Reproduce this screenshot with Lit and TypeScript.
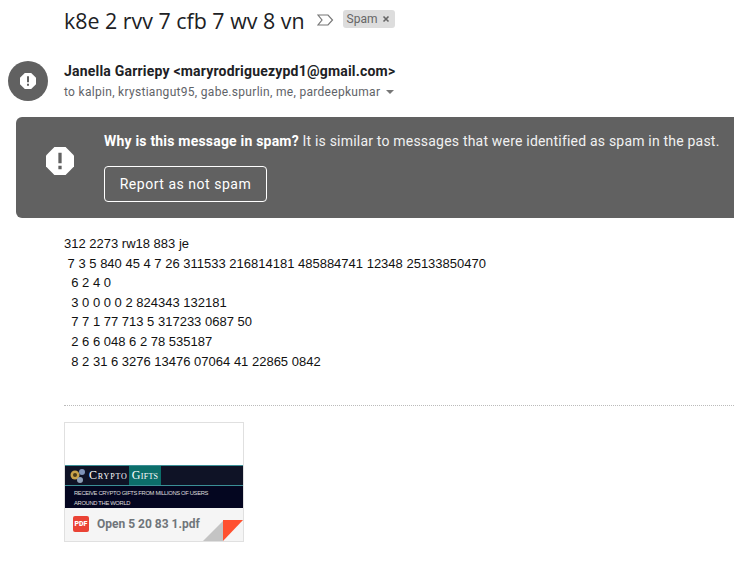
import { LitElement, html, css } from "lit";
import { customElement } from "lit/decorators.js";

const octagon = "M7.2 0h9.6L24 7.2v9.6L16.8 24H7.2L0 16.8V7.2z";

@customElement("app-root")
export class AppRoot extends LitElement {
  static styles = css`
    :host { display: block; width: 734px; height: 564px; overflow: hidden; background: #fff; font-family: Roboto, sans-serif; color: #202124; }
    .subject { display: flex; align-items: center; height: 40px; padding-left: 64px; }
    .title { font-family: "Open Sans", Roboto, sans-serif; font-size: 21.4px; color: #202124; white-space: nowrap; }
    .imp { margin-left: 12px; display: block; }
    .chip { display: flex; align-items: center; margin: 0 0 2px 9px; height: 18px; padding: 0 5px 0 4px; gap: 5px; background: #ddd; border-radius: 3px; font-size: 12px; color: #666; }
    .chip-x { display: block; }
    .sender { display: flex; margin-top: 21px; padding-left: 8px; }
    .avatar { width: 40px; height: 40px; border-radius: 50%; background: #616161; display: flex; align-items: center; justify-content: center; flex: none; }
    .who { margin-left: 16px; padding-top: 1px; }
    .from { font-size: 14px; font-weight: 700; line-height: 18px; letter-spacing: .2px; color: #202124; white-space: nowrap; }
    .to { display: flex; align-items: center; margin-top: 4px; font-size: 12px; line-height: 16px; letter-spacing: .3px; color: #5f6368; white-space: nowrap; }
    .caret { margin-left: 6px; width: 0; height: 0; border-left: 4px solid transparent; border-right: 4px solid transparent; border-top: 4px solid #777; }
    .banner { display: flex; margin: 16px 0 0 16px; height: 101px; background: #616161; border-radius: 6px 0 0 6px; color: #fff; box-sizing: border-box; }
    .banner-icon { width: 88px; display: flex; justify-content: center; flex: none; padding-top: 30px; box-sizing: border-box; }
    .banner-main { padding-top: 14px; }
    .why { font-size: 14px; line-height: 20px; letter-spacing: .2px; white-space: nowrap; color: #f1f1f1; }
    .why b { font-weight: 700; color: #fff; }
    .btn { display: flex; align-items: center; justify-content: center; margin-top: 15px; width: 163px; height: 36px; box-sizing: border-box; border: 1px solid #fff; border-radius: 4px; font-size: 14px; letter-spacing: .53px; color: #fff; }
    .body { margin: 16px 0 0 64px; font-family: "Liberation Sans", Arial, sans-serif; font-size: 13px; line-height: 19.6px; color: #111; white-space: pre; }
    .rule { margin: 34px 0 0 64px; border-top: 1px dotted #bbb; }
    .att { position: relative; margin: 16px 0 0 64px; width: 180px; height: 120px; box-sizing: border-box; border: 1px solid #e0e0e0; display: flex; flex-direction: column; overflow: hidden; }
    .blank { height: 42px; flex: none; }
    .thumb { height: 43px; background: #040620; border-top: 1px solid #3b8f96; flex: none; box-sizing: border-box; }
    .brand { display: flex; align-items: center; height: 19px; background: #0f1326; border-bottom: 1px solid #3b8f96; padding-left: 5px; }
    .coin { display: block; }
    .crypto { margin-left: 1px; font-family: "Liberation Serif", serif; font-size: 12px; letter-spacing: .85px; color: #fff; font-variant: small-caps; white-space: nowrap; }
    .gifts { margin-left: 1px; padding: 0 3px; height: 19px; line-height: 19px; background: #0c6e6a; font-family: "Liberation Serif", serif; font-size: 12px; letter-spacing: .3px; color: #fff; font-variant: small-caps; }
    .tag { padding: 2px 0 0 9px; font-family: "Liberation Sans", sans-serif; font-size: 5.8px; letter-spacing: -.33px; line-height: 10px; color: #ddd; white-space: nowrap; }
    .foot { flex: 1; background: #f5f5f5; display: flex; align-items: center; padding: 0 0 2px 8px; gap: 8px; }
    .pdf { width: 16px; height: 16px; background: #ea4335; border-radius: 2px; color: #fff; font-size: 7px; font-weight: 900; display: flex; align-items: center; justify-content: center; flex: none; }
    .name { font-size: 12px; font-weight: 700; color: #70757a; white-space: nowrap; }
    .fold { position: absolute; right: 0; bottom: 0; display: block; }
  `;

  render() {
    return html`
      <div class="subject">
        <span class="title">k8e 2 rvv 7 cfb 7 wv 8 vn</span>
        <svg class="imp" width="17" height="12" viewBox="0 0 17 12"><path d="M1 1h10l4.5 5-4.5 5H1l4-5z" fill="none" stroke="#777" stroke-width="1.2"/></svg>
        <span class="chip">Spam<svg class="chip-x" width="8" height="8" viewBox="0 0 8 8"><path d="M1.5 1.5l5 5M6.5 1.5l-5 5" stroke="#666" stroke-width="1.6"/></svg></span>
      </div>
      <div class="sender">
        <div class="avatar"><svg width="16" height="16" viewBox="0 0 24 24"><path fill="#fff" d="${octagon}"/><path fill="#616161" d="M10.5 5h3v9h-3zM10.5 16h3v3h-3z"/></svg></div>
        <div class="who">
          <div class="from">Janella Garriepy &lt;maryrodriguezypd1@gmail.com&gt;</div>
          <div class="to">to kalpin, krystiangut95, gabe.spurlin, me, pardeepkumar<span class="caret"></span></div>
        </div>
      </div>
      <div class="banner">
        <div class="banner-icon"><svg width="28" height="28" viewBox="0 0 24 24"><path fill="#fff" d="${octagon}"/><path fill="#616161" d="M10.6 5h2.8v9h-2.8zM10.6 16h2.8v3h-2.8z"/></svg></div>
        <div class="banner-main">
          <div class="why"><b>Why is this message in spam?</b> It is similar to messages that were identified as spam in the past.</div>
          <div class="btn">Report as not spam</div>
        </div>
      </div>
      <div class="body">312 2273 rw18 883 je
 7 3 5 840 45 4 7 26 311533 216814181 485884741 12348 25133850470
  6 2 4 0
  3 0 0 0 0 2 824343 132181
  7 7 1 77 713 5 317233 0687 50
  2 6 6 048 6 2 78 535187
  8 2 31 6 3276 13476 07064 41 22865 0842</div>
      <div class="rule"></div>
      <div class="att">
        <div class="blank"></div>
        <div class="thumb">
          <div class="brand">
            <svg class="coin" width="18" height="16" viewBox="0 0 18 16"><circle cx="5" cy="7" r="4.5" fill="#c9a24a"/><circle cx="5" cy="7" r="2" fill="#4a3a1a"/><circle cx="12" cy="4" r="3" fill="#7f93b8"/><circle cx="10" cy="12" r="3" fill="#8fa0b8"/></svg>
            <span class="crypto">Crypto</span><span class="gifts">Gifts</span>
          </div>
          <div class="tag">RECEIVE CRYPTO GIFTS FROM MILLIONS OF USERS<br />AROUND THE WORLD</div>
        </div>
        <div class="foot"><span class="pdf">PDF</span><span class="name">Open 5 20 83 1.pdf</span></div>
        <svg class="fold" width="40" height="21" viewBox="0 0 40 21"><path d="M0 21L20 1v20z" fill="#c4c4c4"/><path d="M20 0h20L20 21z" fill="#ff5130"/></svg>
      </div>
    `;
  }
}
